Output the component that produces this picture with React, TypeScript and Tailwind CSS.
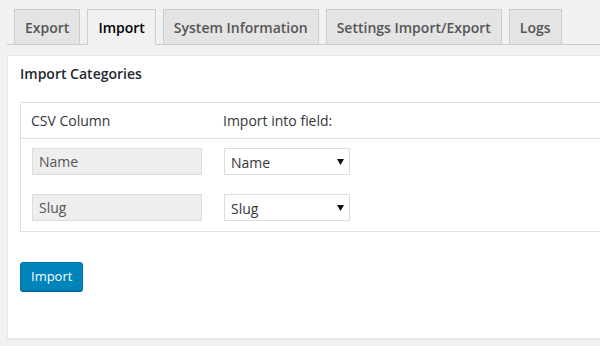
import { useState } from "react";

const tabs = ["Export", "Import", "System Information", "Settings Import/Export", "Logs"];

const fields = [
    { column: "Name", value: "Name" },
    { column: "Slug", value: "Slug" },
];

const FieldSelect = ({ value }: { value: string }) => {
    const [current, setCurrent] = useState(value);
    return (
        <div className="relative w-[126px] h-[27px]">
            <select
                value={current}
                onChange={(e) => setCurrent(e.target.value)}
                className="appearance-none w-full h-full bg-white border border-[#ddd] pl-[6px] pr-6 pt-[2px] text-[14px] text-[#32373c] outline-none"
            >
                <option value="Name">Name</option>
                <option value="Slug">Slug</option>
                <option value="Description">Description</option>
            </select>
            <svg className="absolute right-[6px] top-[11px] pointer-events-none" width="7" height="6" viewBox="0 0 7 6">
                <path d="M0 0h7L3.5 6z" fill="#111" />
            </svg>
        </div>
    );
};

export default function App() {
    const [active, setActive] = useState("Import");

    return (
        <div className="min-h-[346px] bg-[#f1f1f1] pl-[7px] pt-[9px] font-['Open_Sans',sans-serif] overflow-hidden">
            <div className="flex gap-[7px] pl-[7px] border-b border-[#ccc] h-[36px]">
                {tabs.map((tab) => (
                    <button
                        key={tab}
                        onClick={() => setActive(tab)}
                        className={
                            tab === active
                                ? "h-[36px] px-[10px] border border-[#ccc] border-b-[#f1f1f1] bg-[#f1f1f1] text-[14px] font-semibold text-black"
                                : "h-[35px] px-[10px] border border-b-0 border-[#ccc] bg-[#e4e4e4] text-[14px] font-semibold text-[#555]"
                        }
                    >
                        {tab}
                    </button>
                ))}
            </div>

            <div className="mt-[10px] bg-white border border-[#e5e5e5] shadow-[0_1px_1px_rgba(0,0,0,0.04)] w-[620px] h-[284px] pl-[12px] pt-[8px]">
                <h3 className="text-[14px] font-semibold text-[#23282d] leading-[20px]">Import Categories</h3>

                <div className="mt-[18px] border border-[#e1e1e1]">
                    <div className="flex h-[36px] items-center border-b border-[#e1e1e1] text-[14px] text-[#32373c]">
                        <span className="w-[202px] pl-[10px]">CSV Column</span>
                        <span>Import into field:</span>
                    </div>
                    <div className="flex flex-col gap-[19px] pt-[9px] pb-[10px]">
                        {fields.map((f) => (
                            <div key={f.column} className="flex items-center">
                                <div className="w-[202px] pl-[11px]">
                                    <div className="w-[170px] h-[27px] bg-[#eee] border border-[#ddd] pl-[6px] pt-px text-[14px] leading-[24px] text-[#555]">
                                        {f.column}
                                    </div>
                                </div>
                                <div className="pl-px">
                                    <FieldSelect value={f.value} />
                                </div>
                            </div>
                        ))}
                    </div>
                </div>

                <button className="mt-[30px] h-[29px] px-[10px] bg-[#0085ba] border border-[#0073aa] rounded-[3px] shadow-[0_1px_0_#006799] text-[13px] text-white">
                    Import
                </button>
            </div>
        </div>
    );
}
